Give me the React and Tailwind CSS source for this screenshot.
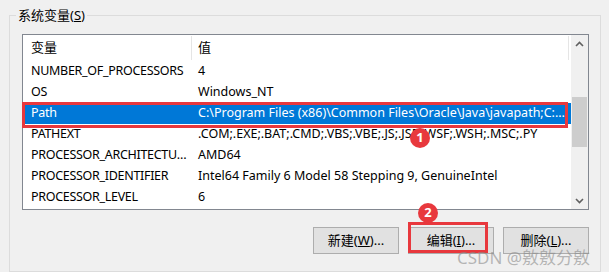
const rows = [
  ["NUMBER_OF_PROCESSORS", "4"],
  ["OS", "Windows_NT"],
  ["Path", "C:\\Program Files (x86)\\Common Files\\Oracle\\Java\\javapath;C:\\Windows\\system32"],
  ["PATHEXT", ".COM;.EXE;.BAT;.CMD;.VBS;.VBE;.JS;.JSE;.WSF;.WSH;.MSC;.PY"],
  ["PROCESSOR_ARCHITECTURE", "AMD64"],
  ["PROCESSOR_IDENTIFIER", "Intel64 Family 6 Model 58 Stepping 9, GenuineIntel"],
  ["PROCESSOR_LEVEL", "6"],
];

const Chevron = ({ down }) => (
  <svg width="9" height="6" viewBox="0 0 9 6" className={down ? "rotate-180" : ""}>
    <path d="M1 5 L4.5 1.5 L8 5" fill="none" stroke="#606060" strokeWidth="1.6" />
  </svg>
);

const Button = ({ label, hotkey }) => (
  <button className="w-[86px] h-[27px] bg-[#e1e1e1] border border-[#adadad] text-[13px] text-black flex items-center justify-center">
    {label}(<span className="underline">{hotkey}</span>)...
  </button>
);

export default function App() {
  return (
    <div
      className="relative w-[609px] h-[272px] bg-[#f0f0f0] overflow-hidden pt-[15px] pl-[9px] text-black"
      style={{ fontFamily: '"Noto Sans", "Noto Sans CJK SC", sans-serif' }}
    >
      {/* group box */}
      <div className="relative w-[592px] h-[257px] border border-[#dcdcdc] pt-[18px] pl-[12px]">
        <span className="absolute -top-[10px] left-[6px] px-[2px] bg-[#f0f0f0] text-[13px] leading-[18px]">
          系统变量(<span className="underline">S</span>)
        </span>

        {/* list */}
        <div className="relative w-[567px] h-[176px] border border-[#828790] bg-white flex">
          <div className="w-[548px] flex flex-col text-[12.5px]">
            <div className="flex h-[26px] shrink-0 text-[13px]">
              <div className="w-[169px] pl-[8px] flex items-center border-r border-[#e5e5e5] my-[1px]">变量</div>
              <div className="w-[377px] pl-[6px] flex items-center border-r border-[#e5e5e5] my-[1px]">值</div>
            </div>
            {rows.map(([name, value]) => {
              const sel = name === "Path";
              return (
                <div
                  key={name}
                  className={
                    "flex h-[21px] shrink-0 items-center " + (sel ? "bg-[#0078d7] text-white" : "")
                  }
                >
                  <div className="w-[169px] shrink-0 pl-[8px] pr-[2px] truncate tracking-[-0.3px]">{name}</div>
                  <div className="w-[378px] min-w-0 pl-[6px] pr-[4px] truncate">{value}</div>
                </div>
              );
            })}
          </div>

          {/* scrollbar */}
          <div className="w-[17px] bg-[#f0f0f0] flex flex-col items-center">
            <div className="h-[17px] flex items-center justify-center">
              <Chevron />
            </div>
            <div className="h-[45px]" />
            <div className="w-[15px] h-[50px] bg-[#cdcdcd]" />
            <div className="flex-1" />
            <div className="h-[17px] flex items-center justify-center">
              <Chevron down />
            </div>
          </div>

          {/* annotation around Path row */}
          <div className="absolute -left-[1px] top-[67px] w-[546px] h-[26px] border-[3px] border-[#e8383d]" />
        </div>

        {/* buttons */}
        <div className="flex gap-[9px] pl-[291px] mt-[17px]">
          <Button label="新建" hotkey="W" />
          <Button label="编辑" hotkey="I" />
          <Button label="删除" hotkey="L" />
        </div>
      </div>

      {/* annotations */}
      <div className="absolute left-[408px] top-[222px] w-[80px] h-[31px] border-[3px] border-[#e8383d]" />
      <div className="absolute left-[410px] top-[128px] w-[20px] h-[20px] rounded-full bg-[#e8383d] text-white text-[13px] font-bold flex items-center justify-center">
        1
      </div>
      <div className="absolute left-[418px] top-[203px] w-[20px] h-[20px] rounded-full bg-[#e8383d] text-white text-[13px] font-bold flex items-center justify-center">
        2
      </div>
      <div className="absolute left-[457px] top-[247px] text-[17px] leading-[22px] text-[#8c8c8c]/60 whitespace-nowrap">
        CSDN @敫敫分敫
      </div>
    </div>
  );
}
